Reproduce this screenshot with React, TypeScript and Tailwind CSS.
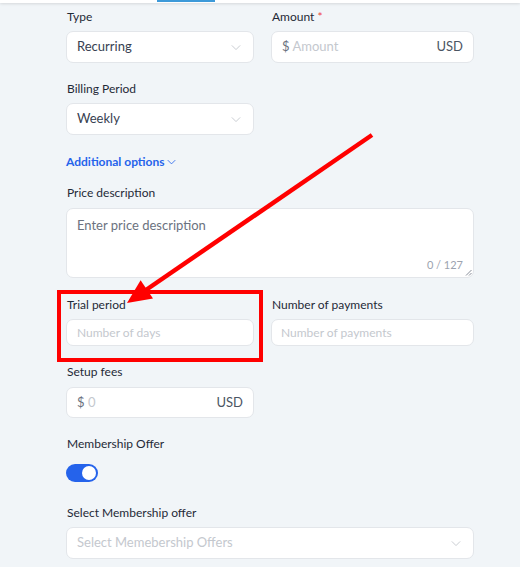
import React from 'react';

const font = { fontFamily: 'Lato, "Noto Sans", sans-serif' };

const Chevron: React.FC<{ className?: string }> = ({ className }) => (
  <svg viewBox="0 0 12 8" className={className} fill="none" stroke="currentColor" strokeWidth="1.1">
    <path d="M1 1.5 6 6.5 11 1.5" />
  </svg>
);

const Label: React.FC<{ children: React.ReactNode }> = ({ children }) => (
  <div className="text-[12px] leading-4 text-[#1f2937] pl-[1px]">{children}</div>
);

const box = 'bg-white border border-[#e3e6ea] rounded-[7px] flex items-center';

const Select: React.FC<{ value: string; placeholder?: boolean }> = ({ value, placeholder }) => (
  <div className={`${box} h-[32px] pl-[10px] pr-[12px] justify-between`}>
    <span className={`text-[13px] ${placeholder ? 'text-[#c4c8ce]' : 'text-[#374151]'}`}>{value}</span>
    <Chevron className="w-[10px] h-[7px] text-[#c4c8ce]" />
  </div>
);

const App: React.FC = () => {
  return (
    <div className="w-[520px] h-[567px] bg-[#f1f5f8] relative overflow-hidden" style={font}>
      <div className="h-[3px] bg-white shadow-[0_1px_3px_rgba(0,0,0,0.12)] pl-[157px]">
        <div className="w-[58px] h-[2px] bg-[#3d9ad9]" />
      </div>

      <div className="pl-[66px] w-[474px] pt-[6px]">
        <div className="grid grid-cols-[188px_203px] gap-x-[17px]">
          <div className="flex flex-col gap-[6px]">
            <Label>Type</Label>
            <Select value="Recurring" />
          </div>
          <div className="flex flex-col gap-[6px]">
            <Label>
              Amount <span className="text-[#ef4444]">*</span>
            </Label>
            <div className={`${box} h-[32px] px-[10px] justify-between text-[13px]`}>
              <span>
                <span className="text-[#6b7280]">$ </span>
                <span className="text-[#c4c8ce]">Amount</span>
              </span>
              <span className="text-[#4b5563]">USD</span>
            </div>
          </div>
        </div>

        <div className="flex flex-col gap-[6px] w-[188px] mt-[18px]">
          <Label>Billing Period</Label>
          <Select value="Weekly" />
        </div>

        <div className="mt-[19px] flex items-center gap-[2px] text-[12px] leading-4 font-bold text-[#2563eb]">
          Additional options
          <Chevron className="w-[9px] h-[6px] text-[#2563eb]" />
        </div>

        <div className="flex flex-col gap-[7px] mt-[15px]">
          <Label>Price description</Label>
          <div className="bg-white border border-[#e3e6ea] rounded-[7px] h-[70px] relative px-[10px] pt-[3px]">
            <span className="text-[13px] text-[#6b7280]">Enter price description</span>
            <span className="absolute right-[10px] bottom-[4px] text-[11px] text-[#9ca3af]">0 / 127</span>
            <svg className="absolute right-[1px] bottom-[1px] w-[7px] h-[7px]" viewBox="0 0 7 7" stroke="#6b7280" strokeWidth="0.8">
              <path d="M6.5 1 1 6.5M6.5 4 4 6.5" />
            </svg>
          </div>
        </div>

        <div className="grid grid-cols-[188px_203px] gap-x-[17px] mt-[19px]">
          <div className="flex flex-col gap-[6px]">
            <Label>Trial period</Label>
            <div className={`${box} h-[27px] px-[10px] text-[12px] text-[#c4c8ce]`}>Number of days</div>
          </div>
          <div className="flex flex-col gap-[6px]">
            <Label>Number of payments</Label>
            <div className={`${box} h-[27px] px-[9px] text-[12px] text-[#c4c8ce]`}>Number of payments</div>
          </div>
        </div>

        <div className="flex flex-col gap-[7px] w-[188px] mt-[18px]">
          <Label>Setup fees</Label>
          <div className={`${box} h-[31px] px-[10px] justify-between text-[13px]`}>
            <span>
              <span className="text-[#6b7280]">$ </span>
              <span className="text-[#c4c8ce]">0</span>
            </span>
            <span className="text-[#4b5563]">USD</span>
          </div>
        </div>

        <div className="flex flex-col gap-[12px] mt-[18px]">
          <Label>Membership Offer</Label>
          <div className="w-[32px] h-[18px] rounded-full bg-[#2563eb] flex items-center justify-end pr-[2px]">
            <div className="w-[14px] h-[14px] rounded-full bg-white" />
          </div>
        </div>

        <div className="flex flex-col gap-[6px] mt-[23px]">
          <Label>Select Membership offer</Label>
          <Select value="Select Memebership Offers" placeholder />
        </div>
      </div>

      {/* annotation overlay */}
      <div className="absolute left-[57px] top-[290px] w-[206px] h-[72px] border-4 border-[#ff0000]" />
      <svg className="absolute left-0 top-0 w-[520px] h-[567px] pointer-events-none" viewBox="0 0 520 567">
        <line x1="372" y1="135" x2="143" y2="292" stroke="#ff0000" strokeWidth="4.5" />
        <polygon points="127,303 140.6,280.3 153,298.5" fill="#ff0000" />
      </svg>
    </div>
  );
};

export default App;
